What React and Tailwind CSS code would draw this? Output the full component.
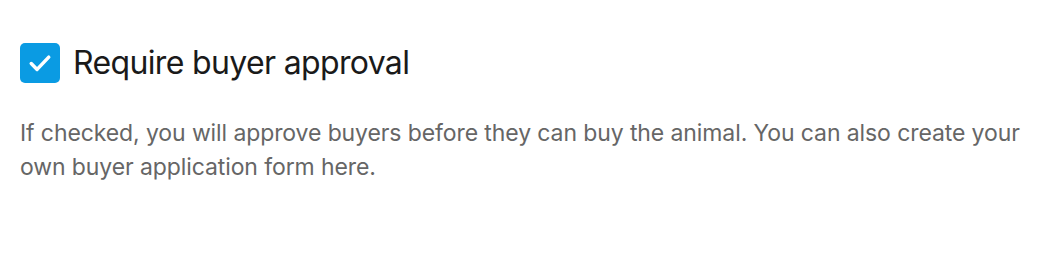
export default function App() {
  return (
    <div className="w-[1048px] h-[262px] bg-white px-5 pt-[43px]" style={{ fontFamily: "Inter, 'Noto Sans', sans-serif" }}>
      <div className="flex items-center gap-[13px]">
        <div className="w-10 h-10 rounded-[5px] bg-[#0a9be3] flex items-center justify-center">
          <svg width="28" height="28" viewBox="0 0 24 24" fill="none" stroke="white" strokeWidth="3" strokeLinecap="round" strokeLinejoin="round">
            <path d="M4.5 12.5l5 5L19.5 7" />
          </svg>
        </div>
        <span className="text-[32px] leading-10 text-[#1a1a1a] tracking-[-0.65px]">Require buyer approval</span>
      </div>
      <p className="mt-[33px] text-[23px] leading-[34px] text-[#666666] tracking-[-0.1px] max-w-[1010px]">
        If checked, you will approve buyers before they can buy the animal. You can also create your own buyer application form here.
      </p>
    </div>
  );
}
